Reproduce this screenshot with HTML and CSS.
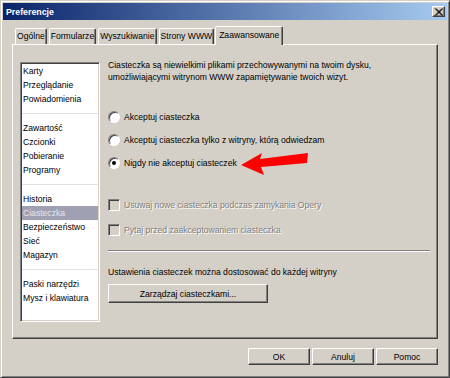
FILE: index.html
```html
<!DOCTYPE html>
<html lang="pl">
<head>
    <meta charset="UTF-8">
    <title>Preferencje</title>
    <link rel="stylesheet" href="styles.css">
</head>
<body>
    <div class="window">
        <div class="titlebar">
            <span class="title">Preferencje</span>
            <span class="close">
                <svg width="9" height="8" viewBox="0 0 9 8"><path d="M1 0.5 L8 7.5 M2 0.5 L9 7.5 M8 0.5 L1 7.5 M9 0.5 L2 7.5" stroke="#000" stroke-width="1"/></svg>
            </span>
        </div>
        <div class="dialog">
            <div class="tabs">
                <div class="tab">Ogólne</div>
                <div class="tab">Formularze</div>
                <div class="tab">Wyszukiwanie</div>
                <div class="tab">Strony WWW</div>
                <div class="tab active">Zaawansowane</div>
            </div>
            <div class="panel">
                <ul class="nav">
                    <li>Karty</li>
                    <li>Przeglądanie</li>
                    <li>Powiadomienia</li>
                    <li class="sep"></li>
                    <li>Zawartość</li>
                    <li>Czcionki</li>
                    <li>Pobieranie</li>
                    <li>Programy</li>
                    <li class="sep"></li>
                    <li>Historia</li>
                    <li class="selected">Ciasteczka</li>
                    <li>Bezpieczeństwo</li>
                    <li>Sieć</li>
                    <li>Magazyn</li>
                    <li class="sep"></li>
                    <li>Paski narzędzi</li>
                    <li>Mysz i klawiatura</li>
                </ul>
                <div class="content">
                    <p class="desc">Ciasteczka są niewielkimi plikami przechowywanymi na twoim dysku,<br>umożliwiającymi witrynom WWW zapamiętywanie twoich wizyt.</p>
                    <div class="options">
                        <label class="option"><span class="radio"></span>Akceptuj ciasteczka</label>
                        <label class="option"><span class="radio"></span>Akceptuj ciasteczka tylko z witryny, którą odwiedzam</label>
                        <label class="option"><span class="radio checked"></span>Nigdy nie akceptuj ciasteczek</label>
                    </div>
                    <div class="checks">
                        <label class="option disabled"><span class="check"></span>Usuwaj nowe ciasteczka podczas zamykania Opery</label>
                        <label class="option disabled"><span class="check"></span>Pytaj przed zaakceptowaniem ciasteczka</label>
                    </div>
                    <div class="rule"></div>
                    <p class="note">Ustawienia ciasteczek można dostosować do każdej witryny</p>
                    <button class="btn manage">Zarządzaj ciasteczkami...</button>
                </div>
                <svg class="arrow" width="70" height="26" viewBox="0 0 70 26">
                    <polygon points="2,14 23,2 21,8 69,2 68,12 22,16 25,24" fill="#f00"/>
                </svg>
            </div>
            <div class="actions">
                <button class="btn">OK</button>
                <button class="btn">Anuluj</button>
                <button class="btn">Pomoc</button>
            </div>
        </div>
    </div>
</body>
</html>
```

FILE: styles.css
```css
body {
    margin: 0;
    font-family: 'Liberation Sans', Arial, sans-serif;
    font-size: 8.6px;
    color: #000;
    background: #d4d0c8;
}
.window {
    width: 450px;
    height: 378px;
    box-sizing: border-box;
    background: #d4d0c8;
    border: 1px solid;
    border-color: #d4d0c8 #404040 #404040 #d4d0c8;
    box-shadow: inset 1px 1px #fff, inset -1px -1px #808080;
    padding: 2px;
}
.titlebar {
    height: 17px;
    display: flex;
    align-items: center;
    justify-content: space-between;
    padding: 0 2px 0 3px;
    background: linear-gradient(to right, #0a246a, #a6caf0);
}
.title {
    color: #fff;
    font-weight: bold;
    font-size: 8.8px;
}
.close {
    width: 13px;
    height: 11px;
    box-sizing: border-box;
    display: flex;
    align-items: center;
    justify-content: center;
    background: #d4d0c8;
    border: 1px solid;
    border-color: #fff #404040 #404040 #fff;
    box-shadow: inset -1px -1px #808080;
}
.dialog {
    padding: 6px 9px 0;
}
.tabs {
    display: flex;
    align-items: flex-end;
    height: 18px;
    padding-left: 3px;
    gap: 2px;
    position: relative;
    z-index: 1;
}
.tab {
    height: 16px;
    box-sizing: border-box;
    padding: 0 1px;
    line-height: 15px;
    border: 1px solid;
    border-bottom: none;
    border-color: #fff #404040 transparent #fff;
    box-shadow: inset -1px 0 #808080;
    border-radius: 2px 2px 0 0;
    background: #d4d0c8;
}
.tab.active {
    height: 19px;
    margin: 0 0 -1px -1px;
    padding: 0 3px;
    line-height: 16px;
}
.panel {
    position: relative;
    height: 295px;
    box-sizing: border-box;
    display: flex;
    gap: 8px;
    padding: 17px 7px 0 7px;
    border: 1px solid;
    border-color: #fff #404040 #404040 #fff;
    box-shadow: inset -1px -1px #808080;
}
.nav {
    list-style: none;
    margin: 0;
    width: 80px;
    height: 260px;
    box-sizing: border-box;
    padding: 1px 0 0;
    background: #fff;
    border: 1px solid;
    border-color: #808080 #fff #fff #808080;
    box-shadow: inset 1px 1px #404040, inset -1px -1px #d4d0c8;
}
.nav li {
    height: 14px;
    line-height: 14px;
    padding-left: 1px;
    margin: 0 1px 0 1px;
    white-space: nowrap;
}
.nav li.sep {
    height: 15px;
    padding: 0;
    background: linear-gradient(#e2e2e2, #e2e2e2) 0 7px / 100% 1px no-repeat;
}
.nav li.selected {
    background: #9fa1b2;
    color: #e6e6ee;
}
.content {
    flex: 1;
    display: flex;
    flex-direction: column;
    align-items: flex-start;
}
.desc {
    margin: -3px 0 0;
    line-height: 12px;
}
.options {
    margin-top: 28px;
    display: flex;
    flex-direction: column;
    gap: 11px;
}
.option {
    display: flex;
    align-items: center;
    gap: 4px;
    height: 12px;
    white-space: nowrap;
}
.radio {
    width: 12px;
    height: 12px;
    box-sizing: border-box;
    border-radius: 50%;
    background: #fff;
    border: 1px solid;
    border-color: #808080 #fff #fff #808080;
    box-shadow: inset 1px 1px #404040;
    display: flex;
    align-items: center;
    justify-content: center;
}
.radio.checked::after {
    content: "";
    width: 4px;
    height: 4px;
    border-radius: 50%;
    background: #000;
}
.checks {
    margin-top: 29px;
    display: flex;
    flex-direction: column;
    gap: 12px;
}
.option.disabled {
    color: #808080;
    text-shadow: 1px 1px #fff;
    height: 13px;
}
.check {
    width: 12px;
    height: 12px;
    box-sizing: border-box;
    background: #d4d0c8;
    border: 1px solid;
    border-color: #808080 #fff #fff #808080;
    box-shadow: inset 1px 1px #404040;
}
.rule {
    align-self: stretch;
    margin-top: 14px;
    height: 1px;
    background: #808080;
    border-bottom: 1px solid #fff;
}
.note {
    margin: 15px 0 0;
}
.btn {
    font-family: inherit;
    font-size: 8.6px;
    color: #000;
    background: #d4d0c8;
    height: 18px;
    padding: 0;
    border: 1px solid;
    border-color: #fff #404040 #404040 #fff;
    box-shadow: inset -1px -1px #808080;
}
.manage {
    margin-top: 7px;
    width: 160px;
    height: 19px;
}
.arrow {
    position: absolute;
    left: 226px;
    top: 106px;
}
.actions {
    margin-top: 9px;
    display: flex;
    justify-content: flex-end;
    gap: 2px;
}
.actions .btn {
    width: 62px;
    height: 17px;
}
```
